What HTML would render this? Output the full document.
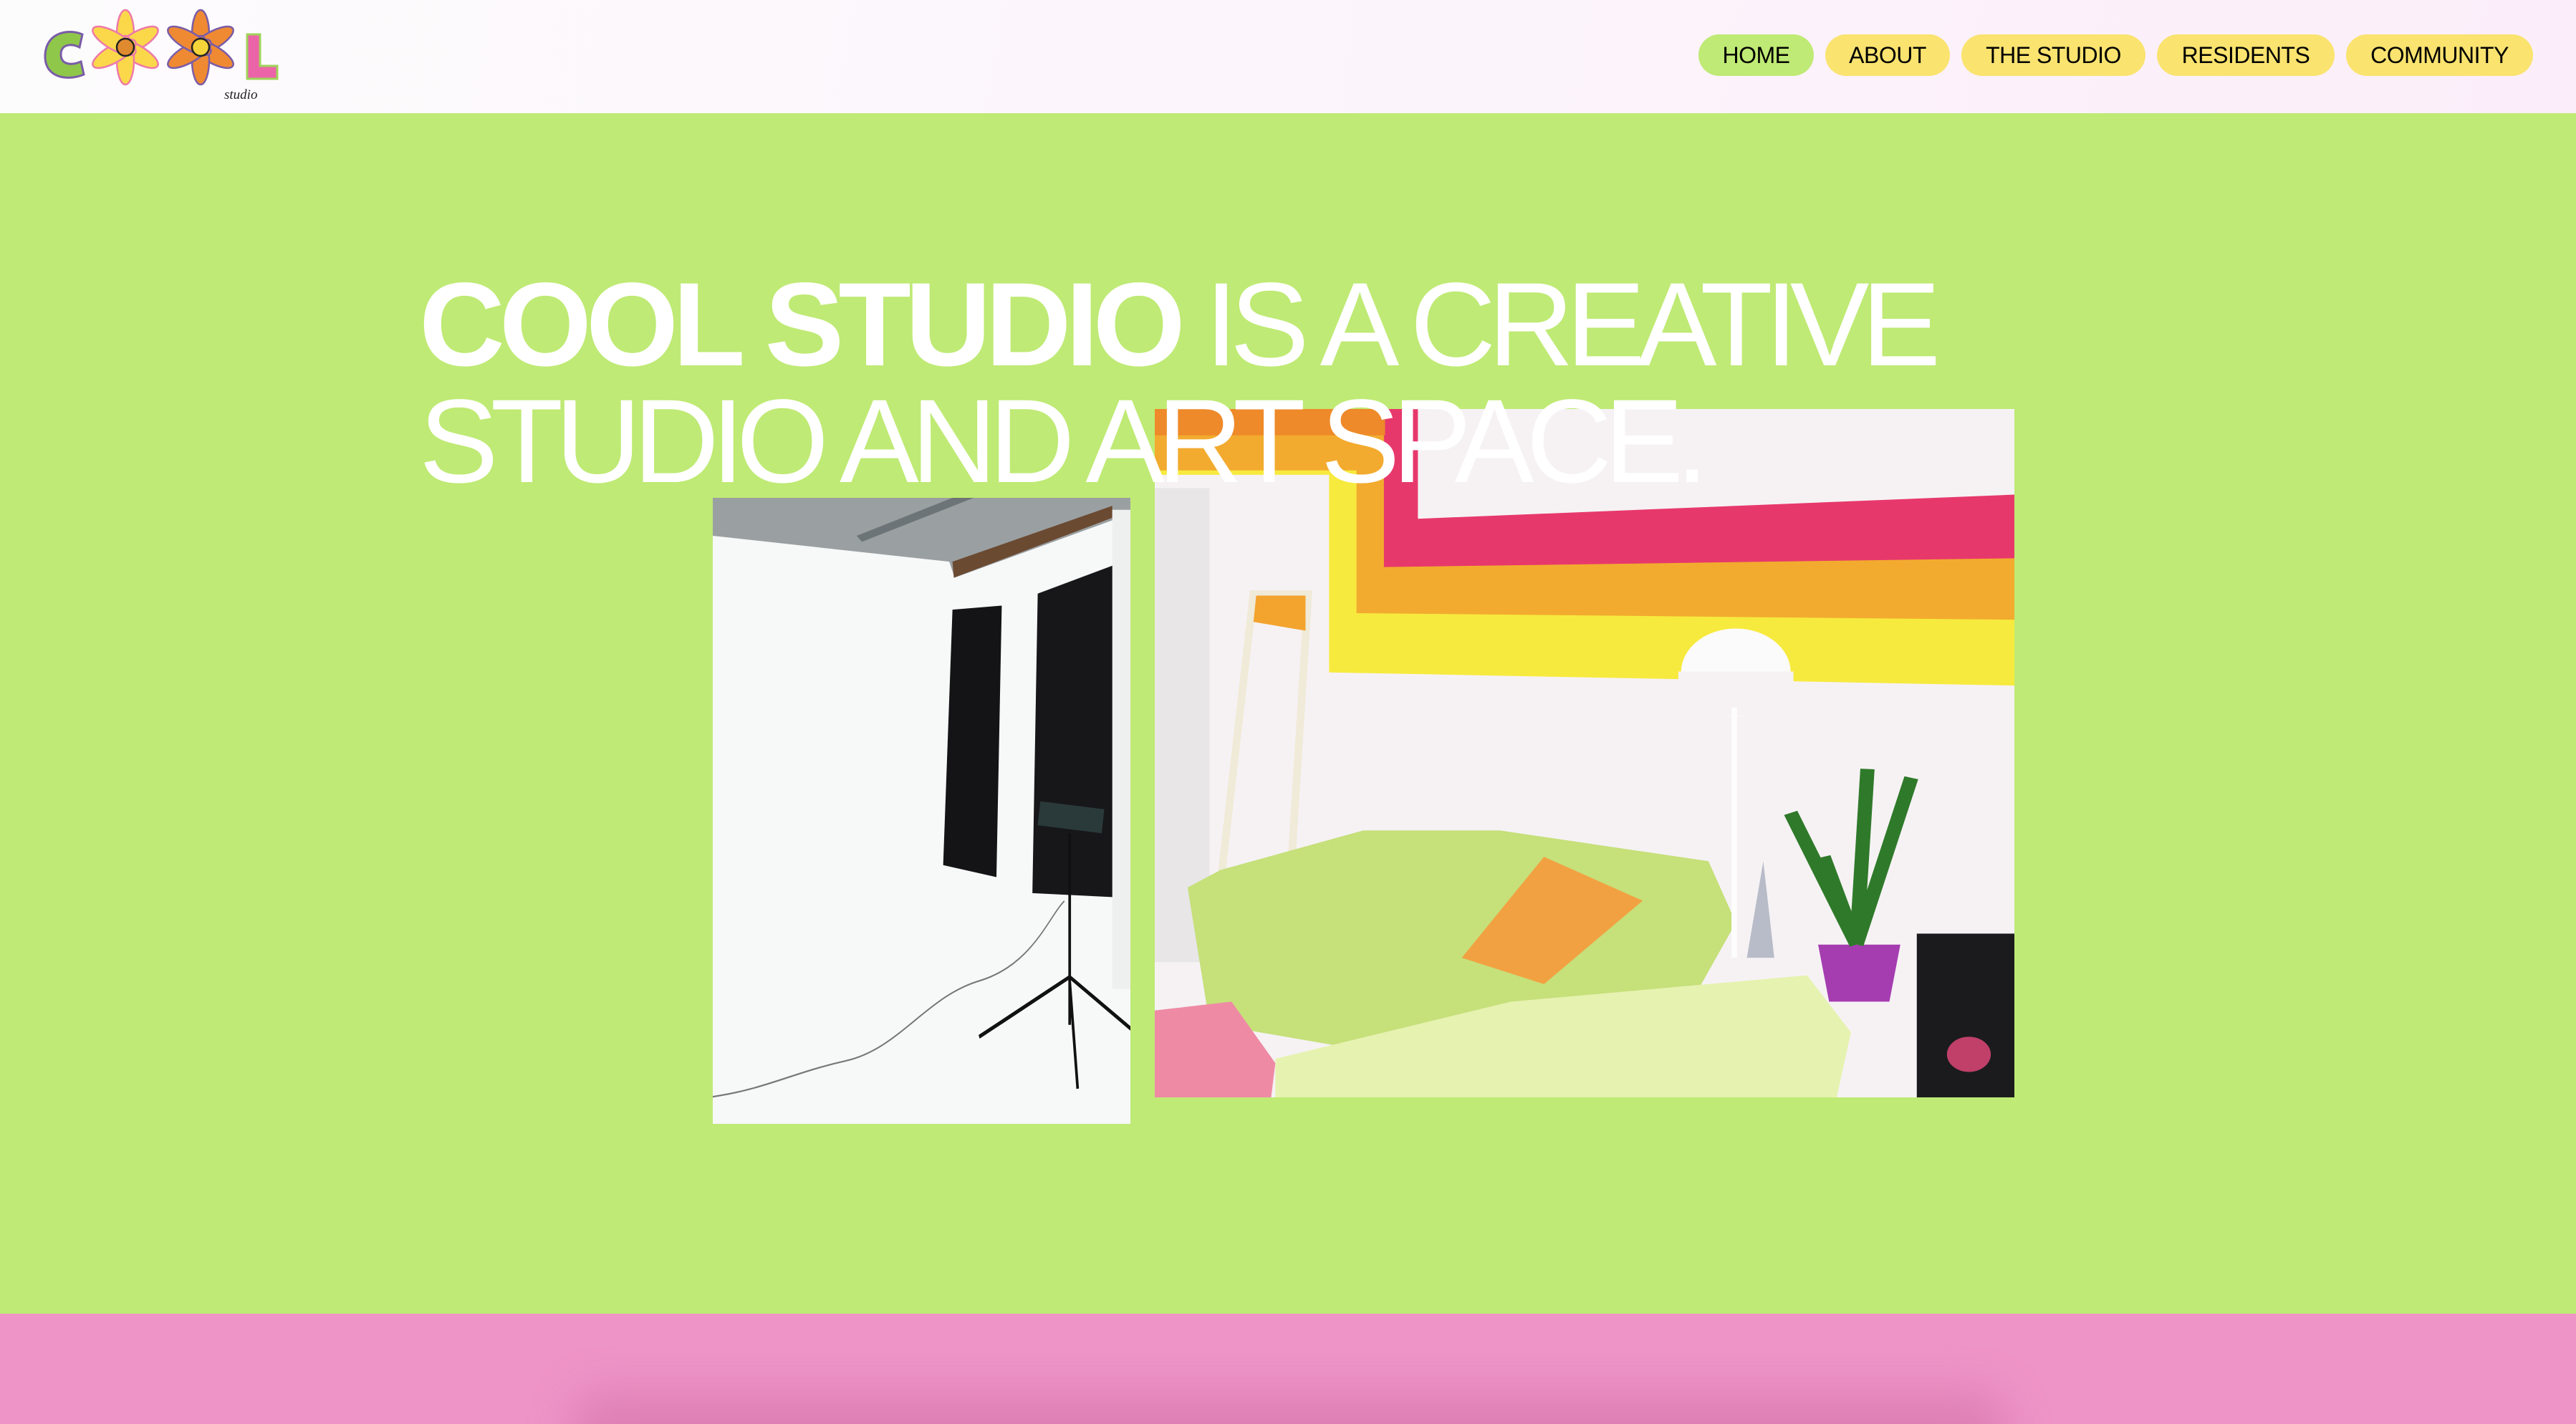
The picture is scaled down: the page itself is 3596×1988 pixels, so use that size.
<!DOCTYPE html>
<html style="overflow:hidden"><head><meta charset="utf-8"><style>
*{margin:0;padding:0;box-sizing:border-box}
html,body{width:3596px;height:1988px;overflow:hidden}
body{position:relative;background:#bfea75;font-family:"Liberation Sans",sans-serif}
.wrap{position:absolute;left:0;top:0;width:3596px;height:1988px;overflow:hidden}
.hdr{position:absolute;left:0;top:0;width:3596px;height:158px;background:linear-gradient(100deg,#fdfcfd,#fbeefa)}
.nav a{position:absolute;top:48px;height:58px;border-radius:29px;background:#fae36f;color:#000;font-size:32px;line-height:58px;text-align:center;text-decoration:none;letter-spacing:-0.5px}
.pink{position:absolute;left:0;top:1834px;width:3596px;height:154px;background:#ef94c7;overflow:hidden}
.shadow{position:absolute;left:800px;top:110px;width:2000px;height:120px;background:rgba(190,90,150,.35);filter:blur(30px);border-radius:40px}
h1{position:absolute;left:585px;top:372px;color:#fff;font-size:166px;line-height:163px;font-weight:normal;letter-spacing:-11px;z-index:5;white-space:nowrap}
h1 b{font-weight:bold;letter-spacing:-8px}
.img{position:absolute;overflow:hidden}
</style></head><body><div class="wrap">
<div class="hdr"></div>
<svg style="position:absolute;left:55px;top:10px" width="350" height="140" viewBox="0 0 350 140">
<path d="M60 38c-18-8-50-4-52 28-2 32 30 38 54 28l-4-18c-14 6-28 4-28-10 0-14 14-16 26-10z" fill="#8fc74a" stroke="#7a5ca8" stroke-width="3"/>
<g transform="translate(120,56)" fill="#fbd84a" stroke="#ee7aa8" stroke-width="2.5">
<ellipse rx="12" ry="34" cy="-18"/><ellipse rx="12" ry="34" cy="-18" transform="rotate(60)"/><ellipse rx="12" ry="34" cy="-18" transform="rotate(120)"/><ellipse rx="12" ry="34" cy="-18" transform="rotate(180)"/><ellipse rx="12" ry="34" cy="-18" transform="rotate(240)"/><ellipse rx="12" ry="34" cy="-18" transform="rotate(300)"/>
<circle r="12" fill="#e08a30" stroke="#222"/></g>
<g transform="translate(225,56)" fill="#ef8a33" stroke="#7a5ca8" stroke-width="2.5">
<ellipse rx="12" ry="34" cy="-18"/><ellipse rx="12" ry="34" cy="-18" transform="rotate(60)"/><ellipse rx="12" ry="34" cy="-18" transform="rotate(120)"/><ellipse rx="12" ry="34" cy="-18" transform="rotate(180)"/><ellipse rx="12" ry="34" cy="-18" transform="rotate(240)"/><ellipse rx="12" ry="34" cy="-18" transform="rotate(300)"/>
<circle r="12" fill="#f5d43a" stroke="#222"/></g>
<path d="M290 38h18v44h24v18h-42z" fill="#ec64a8" stroke="#9fd35a" stroke-width="3"/>
<text x="258" y="128" font-family="Liberation Serif" font-style="italic" font-size="19" fill="#222">studio</text>
</svg>
<div class="nav">
<a style="left:2371px;width:161px;background:#bfea75">HOME</a>
<a style="left:2548px;width:174px">ABOUT</a>
<a style="left:2738px;width:257px">THE STUDIO</a>
<a style="left:3011px;width:248px">RESIDENTS</a>
<a style="left:3275px;width:261px">COMMUNITY</a>
</div>
<h1><b>COOL STUDIO</b> IS A CREATIVE<br>STUDIO AND ART SPACE.</h1>

<div class="img" style="left:995px;top:695px;width:583px;height:874px">
<svg width="583" height="874" viewBox="0 0 1568 1568" preserveAspectRatio="none">
<rect width="1568" height="1568" fill="#f7f8f8"/>
<path d="M0 0h1568v40l-660 160-20-40L0 95z" fill="#9aa0a2"/>
<path d="M540 95l360-95h80L560 110z" fill="#6d7477"/>
<path d="M900 160l600-140v30L905 200z" fill="#6b4a32"/>
<rect x="1500" y="30" width="68" height="1200" fill="#eef0f0"/>
<path d="M900 280l185-10-20 680-200-30z" fill="#141416"/>
<path d="M1220 240l280-70v830l-300-10z" fill="#17171a"/>
<path d="M1230 760l240 20-10 60-240-20z" fill="#2a3a3a"/>
<path d="M1340 840v480M1340 1200l-340 150M1340 1200l230 130M1340 1210l30 270" stroke="#111" stroke-width="10" fill="none"/>
<path d="M0 1500c200-20 300-60 500-90s300-160 500-200 260-160 320-200" stroke="#777" stroke-width="4" fill="none"/>
</svg></div>

<div class="img" style="left:1612px;top:571px;width:1200px;height:961px">
<svg width="1200" height="961" viewBox="0 0 1568 1568" preserveAspectRatio="none">
<rect width="1568" height="1568" fill="#f6f2f4"/>
<path d="M0 0h1568v630l-1250-30v-450H0z" fill="#f7ea3e"/>
<path d="M0 0h1568v480l-1200-15V140H0z" fill="#f2ab2f"/>
<path d="M0 0h1568v340l-1150 20V0z" fill="#e7386c"/>
<path d="M480 0h1088v195l-1088 55z" fill="#f6f2f4"/>
<path d="M0 0h420v60H0z" fill="#ee8a2a"/>
<rect x="0" y="180" width="100" height="1080" fill="#e8e6e6"/>
<path d="M180 420h100l-30 600-140 170z" fill="none" stroke="#f0ead8" stroke-width="14"/>
<path d="M185 425h90v80l-95-20z" fill="#f3a42e"/>
<path d="M60 1090l60-40 260-90 250 0 380 70 50 140-90 200-500 110-370-80z" fill="#c6e07a"/>
<path d="M560 1250l150-230 180 100-180 190z" fill="#f2a142"/>
<path d="M220 1480l430-130 540-60 80 130-30 170H220z" fill="#e6f2b0"/>
<path d="M0 1370l140-20 80 140-10 100H0z" fill="#ef8aa5"/>
<circle cx="1060" cy="600" r="100" fill="#fbfbfb"/><rect x="955" y="598" width="210" height="100" fill="#f6f2f4"/>
<rect x="1052" y="680" width="10" height="570" fill="#fdfdfd"/>
<path d="M1210 1220h150l-20 130h-110z" fill="#a53db0"/>
<path d="M1280 1220l-60-200M1280 1220l20-400M1280 1220l100-380M1280 1220l-120-300" stroke="#2f7a2a" stroke-width="26"/>
<rect x="1390" y="1195" width="178" height="373" fill="#1b1b1d"/>
<circle cx="1485" cy="1470" r="40" fill="#c0406a"/>
<path d="M1080 1250l30-220 20 220z" fill="#b8bcc8"/>
</svg></div>

<div class="pink"><div class="shadow"></div></div>
</div></body></html>
